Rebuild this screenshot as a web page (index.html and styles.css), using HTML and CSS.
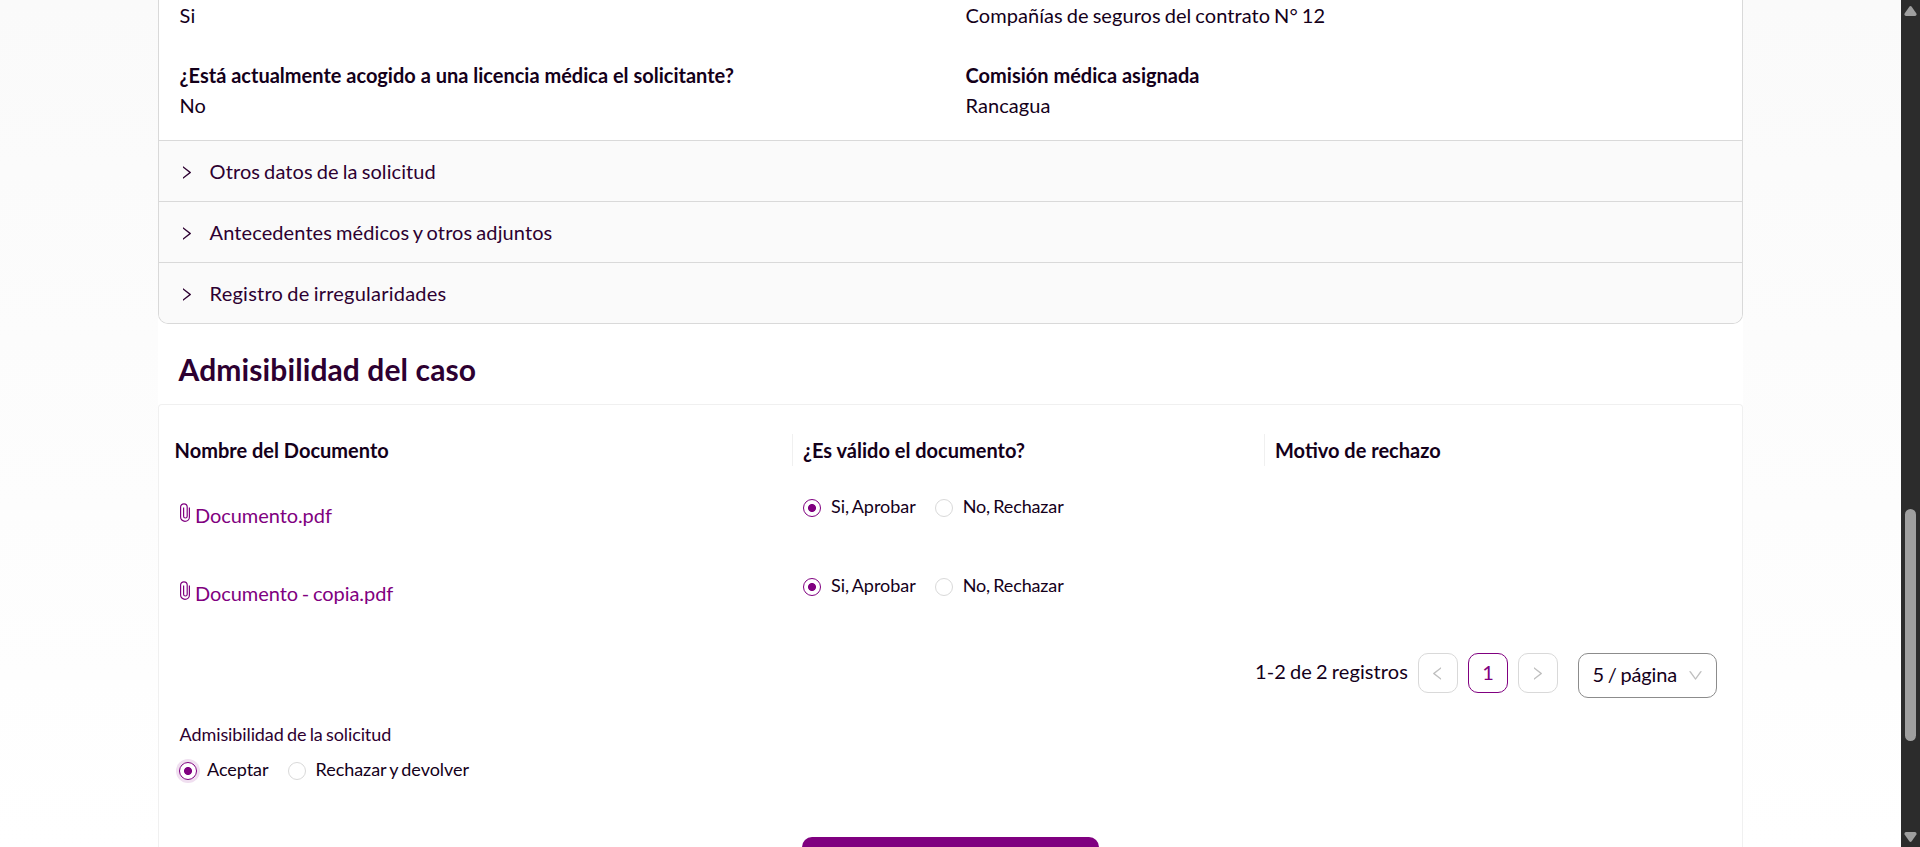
FILE: index.html
```html
<!DOCTYPE html>
<html lang="es">
<head>
<meta charset="utf-8">
<title>Admisibilidad del caso</title>
<link rel="stylesheet" href="styles.css">
</head>
<body>
<svg width="0" height="0" class="sprite" aria-hidden="true">
  <symbol id="right" viewBox="64 64 896 896"><path d="M765.7 486.8L314.9 134.7A7.97 7.97 0 00302 141v77.3c0 4.9 2.3 9.6 6.1 12.6l360 281.1-360 281.1c-3.9 3-6.1 7.7-6.1 12.6V883c0 6.7 7.7 10.4 12.9 6.3l450.8-352.1a31.96 31.96 0 000-50.4z"/></symbol>
  <symbol id="left" viewBox="64 64 896 896"><path d="M724 218.3V141c0-6.7-7.7-10.4-12.9-6.3L260.3 486.8a31.86 31.86 0 000 50.3l450.8 352.1c5.3 4.1 12.9.4 12.9-6.3v-77.3c0-4.9-2.3-9.6-6.1-12.6l-360-281 360-281.1c3.8-3 6.1-7.7 6.1-12.6z"/></symbol>
  <symbol id="down" viewBox="64 64 896 896"><path d="M884 256h-75c-5.1 0-9.9 2.5-12.9 6.6L512 654.2 227.9 262.6c-3-4.1-7.8-6.6-12.9-6.6h-75c-6.5 0-10.3 7.4-6.5 12.7l352.6 486.1c12.8 17.6 39 17.6 51.7 0l352.6-486.1c3.9-5.3.1-12.7-6.4-12.7z"/></symbol>
  <symbol id="clip" viewBox="0 0 10 19"><path d="M9.4 4.5v9.4a4.4 4.4 0 0 1-8.8 0V4.1a3.3 3.3 0 0 1 6.6 0v9.1a1.8 1.8 0 0 1-3.6 0V4.5" fill="none" stroke="currentColor" stroke-width="1.2"/></symbol>
</svg>
<div class="app">
  <main class="page">
    <div class="content">
      <section class="collapse">
        <div class="details">
          <div class="field"><span>Si</span></div>
          <div class="field"><span>Compañías de seguros del contrato N° 12</span></div>
          <div class="field"><strong>¿Está actualmente acogido a una licencia médica el solicitante?</strong><span>No</span></div>
          <div class="field"><strong>Comisión médica asignada</strong><span>Rancagua</span></div>
        </div>
        <div class="panel"><svg class="icon"><use href="#right"/></svg><span>Otros datos de la solicitud</span></div>
        <div class="panel"><svg class="icon"><use href="#right"/></svg><span>Antecedentes médicos y otros adjuntos</span></div>
        <div class="panel wide"><svg class="icon"><use href="#right"/></svg><span>Registro de irregularidades</span></div>
      </section>
      <h2 class="title">Admisibilidad del caso</h2>
      <section class="card">
        <div class="row head">
          <div class="cell">Nombre del Documento</div>
          <div class="cell">¿Es válido el documento?</div>
          <div class="cell">Motivo de rechazo</div>
        </div>
        <div class="row doc">
          <a class="file"><svg class="clip"><use href="#clip"/></svg>Documento.pdf</a>
          <div class="radios">
            <label class="radio"><i class="dot on"></i>Si, Aprobar</label>
            <label class="radio reject"><i class="dot"></i>No, Rechazar</label>
          </div>
        </div>
        <div class="row doc">
          <a class="file"><svg class="clip"><use href="#clip"/></svg>Documento - copia.pdf</a>
          <div class="radios">
            <label class="radio"><i class="dot on"></i>Si, Aprobar</label>
            <label class="radio reject"><i class="dot"></i>No, Rechazar</label>
          </div>
        </div>
        <div class="pager">
          <span class="total">1-2 de 2 registros</span>
          <span class="pg"><svg class="icon"><use href="#left"/></svg></span>
          <span class="pg active">1</span>
          <span class="pg"><svg class="icon"><use href="#right"/></svg></span>
          <span class="select">5 / página<svg class="icon"><use href="#down"/></svg></span>
        </div>
        <div class="decision">
          <div class="label">Admisibilidad de la solicitud</div>
          <div class="radios">
            <label class="radio"><i class="dot on focus"></i>Aceptar</label>
            <label class="radio"><i class="dot"></i>Rechazar y devolver</label>
          </div>
        </div>
        <div class="submit"></div>
      </section>
    </div>
  </main>
  <aside class="scrollbar">
    <svg class="arrow" viewBox="0 0 13 10"><path d="M5.3 .8Q6.5-.6 7.7 .8L12.4 7.6Q13 9.9 11 10H2Q0 9.9 .6 7.6Z"/></svg>
    <div class="thumb"></div>
    <svg class="arrow end" viewBox="0 0 13 10"><path d="M5.3 9.2Q6.5 10.6 7.7 9.2L12.4 2.4Q13 .1 11 0H2Q0 .1 .6 2.4Z"/></svg>
  </aside>
</div>
</body>
</html>
```

FILE: styles.css
```css
* { box-sizing: border-box; }
body { margin: 0; font: 20px/30px Lato, sans-serif; color: #14001a; overflow: hidden; word-spacing: -1.2px; }
.sprite { position: absolute; }
.app { display: flex; height: 847px; overflow: hidden; }
.page { flex: 1; display: flex; justify-content: center; background: linear-gradient(#fafafa, #fff); }
.content { width: 1585px; background: #fff; }
.icon { width: 15px; height: 15px; fill: currentColor; flex: none; }

.collapse { border: 1px solid #d9d9d9; border-top: 0; border-radius: 0 0 10px 10px; overflow: hidden; }
.details { display: grid; grid-template-columns: 786px 1fr; row-gap: 30px; height: 140px; padding: 0 20px 0 20.6px; align-content: start; }
.field { display: flex; flex-direction: column; letter-spacing: .06px; }
.field strong { font-weight: 700; letter-spacing: 0; word-spacing: 0; }
.panel { display: flex; align-items: center; gap: 16px; height: 61px; padding: 0 20px 0 19.6px; border-top: 1px solid #d9d9d9; background: #fafafa; color: #2d0031; letter-spacing: .1px; }
.panel .icon { margin-top: 2px; }
.panel.wide { letter-spacing: .23px; }

.title { margin: 0; height: 80px; padding: 23px 20.6px 0; font-size: 30px; line-height: 45px; font-weight: 700; color: #2d0031; letter-spacing: .1px; word-spacing: 0; }

.card { height: 460px; border: 1px solid #f0f0f0; border-bottom: 0; border-radius: 4px 4px 0 0; padding-top: 29px; }
.row { display: grid; grid-template-columns: 633px 472px 1fr; }
.head { font-weight: 700; height: 32px; line-height: 32px; word-spacing: 0; }
.head .cell { padding-left: 15.6px; }
.head .cell + .cell { padding-left: 10px; border-left: 1px solid #f0f0f0; }
.doc { height: 78px; padding-top: 28px; }
.doc + .doc .radios { padding-top: 1px; }
.file { display: flex; align-items: center; height: 34px; margin-top: 4px; padding-left: 21px; gap: 5px; color: #800080; letter-spacing: -.07px; }
.clip { width: 10px; height: 19px; margin-top: -5px; }
.radios { display: flex; gap: 19px; padding-left: 11px; font-size: 18px; line-height: 24px; color: #14001a; letter-spacing: -.04px; }
.radio { display: flex; gap: 10px; }
.radio.reject { letter-spacing: -.14px; }
.dot { width: 18px; height: 18px; margin-top: 5px; border: 1px solid #d9d9d9; border-radius: 50%; background: #fff; }
.dot.on { border-color: #800080; background: radial-gradient(circle, #800080 3.6px, #fff 4.4px); }
.dot.focus { box-shadow: 0 0 0 3px #f0dff0; }

.pager { display: flex; align-items: flex-start; justify-content: flex-end; gap: 10px; margin: 31px 25px 0 0; }
.total { line-height: 36px; letter-spacing: .1px; }
.pg { display: flex; align-items: center; justify-content: center; width: 40px; height: 40px; padding-right: 1px; border: 1px solid #d9d9d9; border-radius: 10px; color: #bfbfbf; }
.pg.active { padding: 0 0 2px; border-color: #800080; color: #800080; }
.select { display: flex; align-items: center; justify-content: space-between; width: 139px; height: 45px; margin-left: 10px; padding: 0 13px 3px 13.5px; border: 1px solid #8c8c8c; border-radius: 10px; letter-spacing: -.13px; }
.select .icon { color: #bfbfbf; margin-top: 2px; }

.decision { padding: 23px 20.6px 0; }
.label { font-size: 18px; line-height: 26px; color: #2d0031; letter-spacing: -.1px; }
.decision .radios { padding: 10px 0 0; margin-left: -.6px; }
.submit { width: 297px; height: 45px; margin: 56px auto 0; border-radius: 10px; background: #800080; }

.scrollbar { display: flex; flex-direction: column; align-items: center; width: 19px; padding-top: 6px; background: #2c2c2c; }
.arrow { width: 13px; height: 10px; fill: #9f9f9f; }
.thumb { width: 11px; height: 232px; margin-top: 493px; border-radius: 6px; background: #9f9f9f; }
.arrow.end { margin-top: 91px; }
```
